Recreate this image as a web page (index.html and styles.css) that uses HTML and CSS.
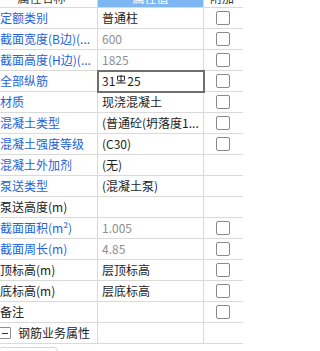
FILE: index.html
```html
<!DOCTYPE html>
<html lang="zh-CN">
<head>
<meta charset="utf-8">
<title>属性列表</title>
<link rel="stylesheet" href="styles.css">
</head>
<body>
<div class="grid">
  <div class="hd hd-name">属性名称</div>
  <div class="hd hd-val">属性值</div>
  <div class="hd hd-add">附加</div>

  <div class="c name blue">定额类别</div><div class="c val">普通柱</div><div class="c add"><span class="cb"></span></div>
  <div class="c name blue">截面宽度(B边)(...</div><div class="c val gray">600</div><div class="c add"><span class="cb"></span></div>
  <div class="c name blue">截面高度(H边)(...</div><div class="c val gray">1825</div><div class="c add"><span class="cb"></span></div>
  <div class="c name blue">全部纵筋</div><div class="c val edit">31<svg class="sym" width="10" height="9" viewBox="0 0 10 9"><path d="M1.5 1.2h7M5 0v7.5M1.5 1.2v3.6q0 1 1 1h5q1 0 1-1V1.2M0.3 8h9.4" fill="none" stroke="#222" stroke-width="1"/></svg>25</div><div class="c add"><span class="cb"></span></div>
  <div class="c name blue">材质</div><div class="c val">现浇混凝土</div><div class="c add"><span class="cb"></span></div>
  <div class="c name blue">混凝土类型</div><div class="c val">(普通砼(坍落度1...</div><div class="c add"><span class="cb"></span></div>
  <div class="c name blue">混凝土强度等级</div><div class="c val">(C30)</div><div class="c add"><span class="cb"></span></div>
  <div class="c name blue">混凝土外加剂</div><div class="c val">(无)</div><div class="c add"></div>
  <div class="c name blue">泵送类型</div><div class="c val">(混凝土泵)</div><div class="c add"></div>
  <div class="c name">泵送高度(m)</div><div class="c val"></div><div class="c add"></div>
  <div class="c name blue">截面面积(m²)</div><div class="c val gray">1.005</div><div class="c add"><span class="cb"></span></div>
  <div class="c name blue">截面周长(m)</div><div class="c val gray">4.85</div><div class="c add"><span class="cb"></span></div>
  <div class="c name">顶标高(m)</div><div class="c val">层顶标高</div><div class="c add"><span class="cb"></span></div>
  <div class="c name">底标高(m)</div><div class="c val">层底标高</div><div class="c add"><span class="cb"></span></div>
  <div class="c name">备注</div><div class="c val"></div><div class="c add"><span class="cb"></span></div>
  <div class="c name group"><span class="tog"></span>钢筋业务属性</div><div class="c val"></div><div class="c add"></div>
</div>
<div class="thumb"></div>
</body>
</html>
```

FILE: styles.css
```css
html, body {
  margin: 0;
  padding: 0;
  background: #ffffff;
  overflow: hidden;
}
body {
  font-family: "Noto Sans CJK SC", "Noto Sans", sans-serif;
  font-size: 12px;
  color: #222222;
  width: 243px;
  height: 351px;
}
.grid {
  display: grid;
  grid-template-columns: 98px 106px 40px;
  grid-auto-rows: 21px;
  margin-top: -13px;
  width: 244px;
}
.hd {
  box-sizing: border-box;
  border-bottom: 1px solid #dadada;
  display: flex;
  align-items: flex-end;
  justify-content: center;
  padding-bottom: 2px;
  line-height: 14px;
  color: #333333;
}
.hd-name {
  padding-right: 14px;
  border-right: 1px solid #dadada;
}
.hd-val {
  background: #7db6f3;
  color: #ffffff;
  border-right: 1px solid #dadada;
}
.hd-add {
  padding-right: 4px;
}
.c {
  box-sizing: border-box;
  border-bottom: 1px solid #dadada;
  display: flex;
  align-items: center;
  white-space: nowrap;
  overflow: hidden;
  line-height: 14px;
}
.name {
  border-right: 1px solid #dadada;
  padding-left: 0;
  color: #222222;
}
.blue {
  color: #2762d9;
}
.val {
  border-right: 1px solid #dadada;
  padding-left: 4px;
  color: #1e1e1e;
}
.gray {
  color: #8f8f8f;
}
.edit {
  outline: 2px solid #6f6f6f;
  outline-offset: -1px;
  overflow: visible;
  position: relative;
  z-index: 1;
}
.sym {
  margin: 0 1px 0 1px;
  align-self: center;
  position: relative;
  top: -2px;
}
.add {
  justify-content: center;
  padding-right: 2px;
}
.cb {
  box-sizing: border-box;
  width: 14px;
  height: 14px;
  border: 1px solid #8a8a8a;
  border-radius: 2px;
  background: #ffffff;
}
.group {
  margin-left: -1px;
}
.tog {
  box-sizing: border-box;
  width: 12px;
  height: 12px;
  border: 1px solid #8c8c8c;
  border-radius: 1px;
  margin-right: 7px;
  display: flex;
  align-items: center;
  justify-content: center;
}
.tog::before {
  content: "";
  width: 6px;
  height: 1px;
  background: #333333;
}
.thumb {
  box-sizing: border-box;
  width: 60px;
  height: 10px;
  margin-top: 3px;
  margin-left: -2px;
  border: 1px solid #d6d6d6;
  border-radius: 4px;
}
```
